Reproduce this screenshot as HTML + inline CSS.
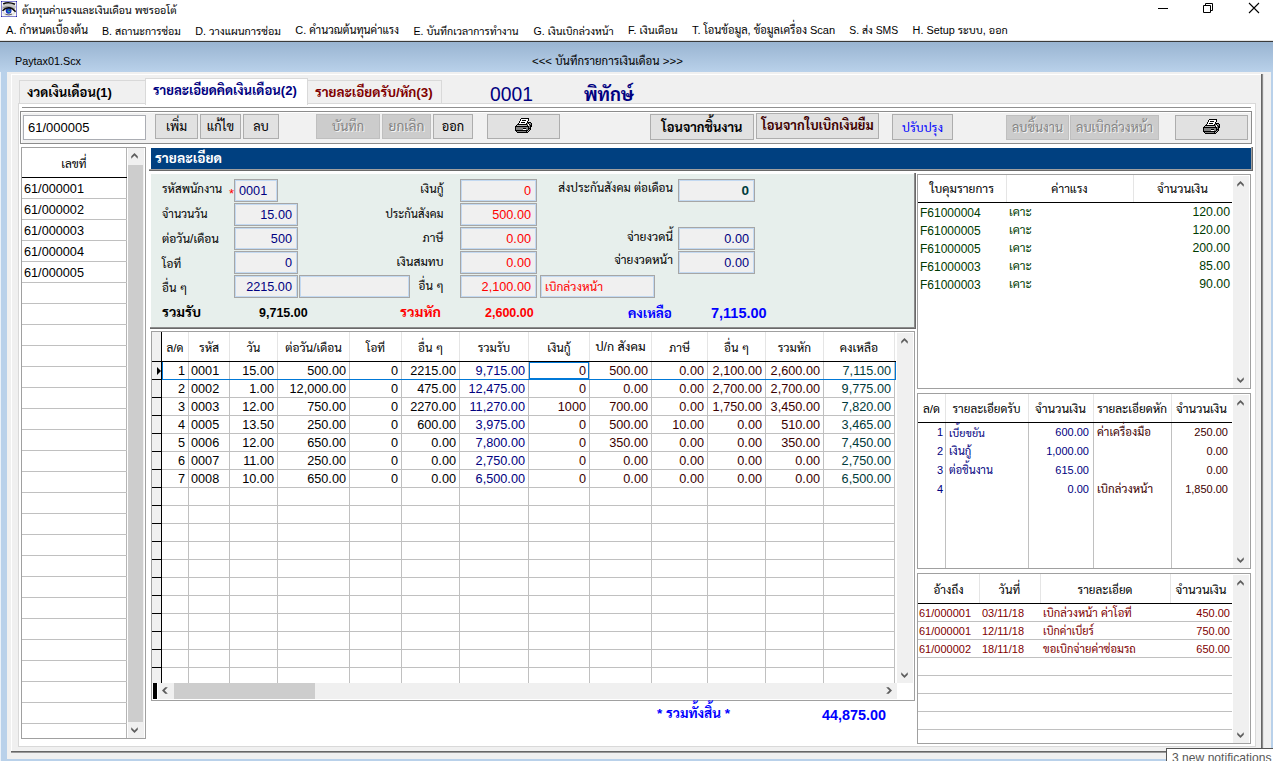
<!DOCTYPE html>
<html lang="th"><head><meta charset="utf-8"><title>Paytax01</title><style>
html,body{margin:0;padding:0;}
body{width:1273px;height:761px;position:relative;overflow:hidden;background:#fff;
 font-family:"Liberation Sans","Sarabun","Loma","Noto Sans Thai Looped","Noto Sans Thai",sans-serif;}
body>div,body>svg{position:absolute;box-sizing:content-box;}
.t{line-height:20px;height:20px;white-space:nowrap;}
.ui{font-family:"Liberation Sans","Sarabun","Noto Sans Thai UI","Loma",sans-serif;}
.serif{font-family:"Liberation Serif","Sarabun",serif;}
</style></head>
<body>
<div style="left:0px;top:0px;width:1273px;height:42px;background:#fff;"></div>
<svg style="left:1px;top:1px" width="16" height="16" viewBox="0 0 16 16">
<rect x="0" y="0" width="16" height="16" fill="#fafafa"/>
<ellipse cx="8" cy="6" rx="7" ry="3.2" fill="#c8c8c8"/>
<ellipse cx="8" cy="11.5" rx="6.5" ry="3.5" fill="#e2e2e2"/>
<path d="M2.2 3 Q7 0.4 14 3.3" stroke="#0a0a0a" stroke-width="1.7" fill="none"/>
<path d="M1.5 7.2 Q7 3.8 13.8 8" stroke="#8a8a8a" stroke-width="1" fill="none"/>
<path d="M2.5 10.5 Q8 5.5 14 10.5 Q8 15.5 2.5 10.5Z" fill="#fdfdfd"/>
<circle cx="7.6" cy="9.8" r="2.9" fill="#1628c4"/>
<circle cx="7.9" cy="9.9" r="1.6" fill="#1a9cae"/>
<circle cx="8.2" cy="9.4" r="0.7" fill="#5a2c48"/>
<path d="M1.5 9.8 Q4.5 6.6 8 6.8 Q11.5 7 14.6 10.8" stroke="#0c0c0c" stroke-width="1.5" fill="none"/>
<path d="M4.5 13.3 Q8 14.6 11 13.1" stroke="#555" stroke-width="0.9" fill="none"/>
<rect x="0.5" y="0.5" width="15" height="15" fill="none" stroke="#8080d0" stroke-width="1"/>
<rect x="0" y="0" width="1" height="1" fill="#2424a8"/><rect x="15" y="0" width="1" height="1" fill="#2424a8"/><rect x="0" y="15" width="1" height="1" fill="#2424a8"/><rect x="15" y="15" width="1" height="1" fill="#2424a8"/>
</svg>
<div class="t ui" id="t1" style="top:-0.5px;font-size:10.6px;color:#000;left:22px;"><span>ต้นทุนค่าแรงและเงินเดือน พชรออโต้</span></div>
<svg style="left:1150px;top:0" width="123" height="20" viewBox="0 0 123 20">
<path d="M8 8.5H18" stroke="#000" stroke-width="1" fill="none"/>
<path d="M53.5 5.5H60.5V12.5H53.5Z M55.5 5.5V3.5H62.5V10.5H60.5" stroke="#000" stroke-width="1" fill="none"/>
<path d="M99 3L109 13M109 3L99 13" stroke="#000" stroke-width="1.1" fill="none"/>
</svg>
<div class="t ui" id="t2" style="top:20.0px;font-size:11.1px;color:#000;left:6px;"><span>A. กำหนดเบื้องต้น</span></div>
<div class="t ui" id="t3" style="top:20.5px;font-size:10.65px;color:#000;left:102px;"><span>B. สถานะการซ่อม</span></div>
<div class="t ui" id="t4" style="top:20.5px;font-size:10.8px;color:#000;left:195.3px;"><span>D. วางแผนการซ่อม</span></div>
<div class="t ui" id="t5" style="top:20.0px;font-size:10.95px;color:#000;left:295.3px;"><span>C. คำนวณต้นทุนค่าแรง</span></div>
<div class="t ui" id="t6" style="top:20.5px;font-size:10.65px;color:#000;left:413.4px;"><span>E. บันทึกเวลาการทำงาน</span></div>
<div class="t ui" id="t7" style="top:20.5px;font-size:10.6px;color:#000;left:533.5px;"><span>G. เงินเบิกล่วงหน้า</span></div>
<div class="t ui" id="t8" style="top:20.0px;font-size:10.85px;color:#000;left:628px;"><span>F. เงินเดือน</span></div>
<div class="t ui" id="t9" style="top:20.0px;font-size:11.05px;color:#000;left:692px;"><span>T. โอนข้อมูล, ข้อมูลเครื่อง Scan</span></div>
<div class="t ui" id="t10" style="top:20.5px;font-size:10.4px;color:#000;left:849.3px;"><span>S. ส่ง SMS</span></div>
<div class="t ui" id="t11" style="top:20.0px;font-size:10.85px;color:#000;left:912.6px;"><span>H. Setup ระบบ, ออก</span></div>
<div style="left:0px;top:40px;width:1273px;height:1px;background:#e4e4e4;"></div>
<div style="left:0px;top:41px;width:1273px;height:1px;background:#3a3a3a;"></div>
<div style="left:0px;top:42px;width:1273px;height:30px;background:linear-gradient(#99b4d1,#b9d1ea);"></div>
<div class="t ui" id="t12" style="top:50.5px;font-size:10.8px;color:#000;left:15px;"><span>Paytax01.Scx</span></div>
<div class="t ui" id="t13" style="top:51.0px;font-size:11.45px;color:#000;left:532px;"><span>&lt;&lt;&lt; บันทึกรายการเงินเดือน &gt;&gt;&gt;</span></div>
<div style="left:0px;top:72px;width:1273px;height:689px;background:#b9d1ea;"></div>
<div style="left:0px;top:72px;width:1px;height:689px;background:#eaf1f9;"></div>
<div style="left:7px;top:72px;width:1264px;height:687px;background:#f0f0f0;"></div>
<div style="left:11px;top:74px;width:1250px;height:1px;background:#fff;"></div>
<div style="left:11px;top:74px;width:1px;height:677px;background:#fff;"></div>
<div style="left:1261px;top:74px;width:2px;height:679px;background:#8c8c8c;"></div>
<div style="left:11px;top:751px;width:1252px;height:2px;background:#9a9a9a;"></div>
<div style="left:1261px;top:74px;width:1px;height:678px;background:#666;"></div>
<div style="left:11px;top:751px;width:1251px;height:1px;background:#666;"></div>
<div style="left:1263px;top:74px;width:1px;height:679px;background:#e3e3e3;"></div>
<div style="left:18px;top:103px;width:1236px;height:642px;border:1px solid #d9d9d9;background:#fff;"></div>
<div style="left:19px;top:80px;width:125px;height:21px;border:1px solid #d9d9d9;background:#f0f0f0;border-bottom:none;height:22px;"></div>
<div style="left:307px;top:80px;width:133px;height:21px;border:1px solid #d9d9d9;background:#f0f0f0;border-bottom:none;height:22px;"></div>
<div style="left:145px;top:78px;width:161px;height:25px;border:1px solid #d9d9d9;background:#fff;border-bottom:none;height:26px;"></div>
<div class="t " id="t14" style="top:83.0px;font-size:13.05px;color:#000;font-weight:bold;left:27px;"><span>งวดเงินเดือน(1)</span></div>
<div class="t " id="t15" style="top:81.0px;font-size:13.1px;color:#000080;font-weight:bold;left:153px;"><span>รายละเอียดคิดเงินเดือน(2)</span></div>
<div class="t " id="t16" style="top:83.0px;font-size:13.45px;color:#800000;font-weight:bold;left:315px;"><span>รายละเอียดรับ/หัก(3)</span></div>
<div class="t " id="t17" style="top:84.5px;font-size:19.3px;color:#000080;left:490px;"><span>0001</span></div>
<div class="t " id="t18" style="top:84.5px;font-size:18.3px;color:#000080;font-weight:bold;left:584px;"><span>พิทักษ์</span></div>
<div style="left:22px;top:107px;width:1229px;height:1px;background:#8f8f8f;"></div>
<div style="left:20px;top:111px;width:1230px;height:31px;border:1px solid #8c8c8c;background:#f1f1f1;"></div>
<div style="left:21px;top:112px;width:1230px;height:1px;background:#fff;"></div>
<div style="left:21px;top:112px;width:1px;height:31px;background:#fff;"></div>
<div style="left:23px;top:115px;width:121px;height:23px;border:1px solid #abadb3;background:#fff;"></div>
<div class="t " id="t19" style="top:117.5px;font-size:13px;color:#000;left:28px;"><span>61/000005</span></div>
<div style="left:155px;top:114px;width:41px;height:23px;border:1px solid #adadad;background:#e1e1e1;"></div>
<div class="t " id="t20" style="top:116.5px;font-size:12.8px;color:#000;left:155px;width:43px;text-align:center;"><span>เพิ่ม</span></div>
<div style="left:200px;top:114px;width:39px;height:23px;border:1px solid #adadad;background:#e1e1e1;"></div>
<div class="t " id="t21" style="top:116.5px;font-size:12.8px;color:#000;left:200px;width:41px;text-align:center;"><span>แก้ไข</span></div>
<div style="left:243px;top:114px;width:34px;height:23px;border:1px solid #adadad;background:#e1e1e1;"></div>
<div class="t " id="t22" style="top:116.5px;font-size:12.8px;color:#000;left:243px;width:36px;text-align:center;"><span>ลบ</span></div>
<div style="left:316px;top:114px;width:62px;height:23px;border:1px solid #bfbfbf;background:#cccccc;"></div>
<div class="t " id="t23" style="top:117.0px;font-size:12.8px;color:#838383;left:316px;width:64px;text-align:center;text-shadow:1px 1px 0 #f4f4f4;"><span>บันทึก</span></div>
<div style="left:382px;top:114px;width:47px;height:23px;border:1px solid #bfbfbf;background:#cccccc;"></div>
<div class="t " id="t24" style="top:116.5px;font-size:13.75px;color:#838383;left:382px;width:49px;text-align:center;text-shadow:1px 1px 0 #f4f4f4;"><span>ยกเลิก</span></div>
<div style="left:433px;top:114px;width:38px;height:23px;border:1px solid #adadad;background:#e1e1e1;"></div>
<div class="t " id="t25" style="top:117.0px;font-size:12.8px;color:#000;left:433px;width:40px;text-align:center;"><span>ออก</span></div>
<div style="left:487px;top:114px;width:71px;height:23px;border:1px solid #adadad;background:#e1e1e1;"></div>
<div style="left:650px;top:114px;width:102px;height:24px;border:1px solid #adadad;background:#e1e1e1;"></div>
<div class="t " id="t26" style="top:117.5px;font-size:12.9px;color:#000;font-weight:bold;left:650px;width:104px;text-align:center;"><span>โอนจากชิ้นงาน</span></div>
<div style="left:756px;top:113px;width:121px;height:24px;border:1px solid #adadad;background:#e1e1e1;"></div>
<div class="t " id="t27" style="top:116.0px;font-size:12.95px;color:#400000;font-weight:bold;left:756px;width:123px;text-align:center;"><span>โอนจากใบเบิกเงินยืม</span></div>
<div style="left:892px;top:114px;width:59px;height:24px;border:1px solid #adadad;background:#e1e1e1;"></div>
<div class="t " id="t28" style="top:117.5px;font-size:12.1px;color:#0000ff;left:892px;width:61px;text-align:center;"><span>ปรับปรุง</span></div>
<div style="left:1006px;top:115px;width:61px;height:23px;border:1px solid #bfbfbf;background:#cccccc;"></div>
<div class="t " id="t29" style="top:117.5px;font-size:12.6px;color:#838383;left:1006px;width:63px;text-align:center;text-shadow:1px 1px 0 #f4f4f4;"><span>ลบชิ้นงาน</span></div>
<div style="left:1070px;top:115px;width:87px;height:23px;border:1px solid #bfbfbf;background:#cccccc;"></div>
<div class="t " id="t30" style="top:117.5px;font-size:12.7px;color:#838383;left:1070px;width:89px;text-align:center;text-shadow:1px 1px 0 #f4f4f4;"><span>ลบเบิกล่วงหน้า</span></div>
<div style="left:1175px;top:115px;width:71px;height:23px;border:1px solid #adadad;background:#e1e1e1;"></div>
<svg style="left:512px;top:118px" width="21" height="15" viewBox="0 0 21 15" shape-rendering="crispEdges"><rect x="9" y="0" width="8" height="1" fill="#000"/><rect x="8" y="1" width="1" height="1" fill="#000"/><rect x="9" y="1" width="7" height="1" fill="#fff"/><rect x="16" y="1" width="1" height="1" fill="#000"/><rect x="8" y="2" width="1" height="1" fill="#000"/><rect x="9" y="2" width="1" height="1" fill="#fff"/><rect x="10" y="2" width="4" height="1" fill="#000"/><rect x="14" y="2" width="2" height="1" fill="#fff"/><rect x="16" y="2" width="1" height="1" fill="#000"/><rect x="7" y="3" width="1" height="1" fill="#000"/><rect x="8" y="3" width="7" height="1" fill="#fff"/><rect x="15" y="3" width="1" height="1" fill="#000"/><rect x="7" y="4" width="1" height="1" fill="#000"/><rect x="8" y="4" width="1" height="1" fill="#fff"/><rect x="9" y="4" width="4" height="1" fill="#000"/><rect x="13" y="4" width="2" height="1" fill="#fff"/><rect x="15" y="4" width="4" height="1" fill="#000"/><rect x="6" y="5" width="1" height="1" fill="#000"/><rect x="7" y="5" width="7" height="1" fill="#fff"/><rect x="14" y="5" width="1" height="1" fill="#000"/><rect x="15" y="5" width="1" height="1" fill="#808080"/><rect x="16" y="5" width="1" height="1" fill="#000"/><rect x="17" y="5" width="1" height="1" fill="#b0b0b0"/><rect x="18" y="5" width="1" height="1" fill="#808080"/><rect x="19" y="5" width="1" height="1" fill="#000"/><rect x="5" y="6" width="10" height="1" fill="#000"/><rect x="15" y="6" width="1" height="1" fill="#808080"/><rect x="16" y="6" width="1" height="1" fill="#fff"/><rect x="17" y="6" width="1" height="1" fill="#000"/><rect x="18" y="6" width="1" height="1" fill="#808080"/><rect x="19" y="6" width="1" height="1" fill="#000"/><rect x="4" y="7" width="1" height="1" fill="#000"/><rect x="5" y="7" width="10" height="1" fill="#b0b0b0"/><rect x="15" y="7" width="1" height="1" fill="#000"/><rect x="16" y="7" width="1" height="1" fill="#fff"/><rect x="17" y="7" width="1" height="1" fill="#808080"/><rect x="18" y="7" width="2" height="1" fill="#000"/><rect x="3" y="8" width="14" height="1" fill="#000"/><rect x="17" y="8" width="1" height="1" fill="#808080"/><rect x="18" y="8" width="2" height="1" fill="#000"/><rect x="3" y="9" width="1" height="1" fill="#000"/><rect x="4" y="9" width="12" height="1" fill="#808080"/><rect x="16" y="9" width="1" height="1" fill="#000"/><rect x="17" y="9" width="1" height="1" fill="#808080"/><rect x="18" y="9" width="1" height="1" fill="#000"/><rect x="3" y="10" width="1" height="1" fill="#000"/><rect x="4" y="10" width="7" height="1" fill="#808080"/><rect x="11" y="10" width="3" height="1" fill="#000"/><rect x="14" y="10" width="2" height="1" fill="#808080"/><rect x="16" y="10" width="3" height="1" fill="#000"/><rect x="3" y="11" width="1" height="1" fill="#000"/><rect x="4" y="11" width="7" height="1" fill="#808080"/><rect x="11" y="11" width="3" height="1" fill="#fff"/><rect x="14" y="11" width="2" height="1" fill="#808080"/><rect x="16" y="11" width="1" height="1" fill="#000"/><rect x="17" y="11" width="1" height="1" fill="#808080"/><rect x="18" y="11" width="1" height="1" fill="#000"/><rect x="3" y="12" width="13" height="1" fill="#000"/><rect x="16" y="12" width="1" height="1" fill="#b0b0b0"/><rect x="17" y="12" width="1" height="1" fill="#000"/><rect x="4" y="13" width="1" height="1" fill="#000"/><rect x="5" y="13" width="9" height="1" fill="#808080"/><rect x="14" y="13" width="1" height="1" fill="#000"/><rect x="15" y="13" width="1" height="1" fill="#b0b0b0"/><rect x="16" y="13" width="1" height="1" fill="#000"/><rect x="5" y="14" width="11" height="1" fill="#000"/></svg>
<svg style="left:1200px;top:119px" width="21" height="15" viewBox="0 0 21 15" shape-rendering="crispEdges"><rect x="9" y="0" width="8" height="1" fill="#000"/><rect x="8" y="1" width="1" height="1" fill="#000"/><rect x="9" y="1" width="7" height="1" fill="#fff"/><rect x="16" y="1" width="1" height="1" fill="#000"/><rect x="8" y="2" width="1" height="1" fill="#000"/><rect x="9" y="2" width="1" height="1" fill="#fff"/><rect x="10" y="2" width="4" height="1" fill="#000"/><rect x="14" y="2" width="2" height="1" fill="#fff"/><rect x="16" y="2" width="1" height="1" fill="#000"/><rect x="7" y="3" width="1" height="1" fill="#000"/><rect x="8" y="3" width="7" height="1" fill="#fff"/><rect x="15" y="3" width="1" height="1" fill="#000"/><rect x="7" y="4" width="1" height="1" fill="#000"/><rect x="8" y="4" width="1" height="1" fill="#fff"/><rect x="9" y="4" width="4" height="1" fill="#000"/><rect x="13" y="4" width="2" height="1" fill="#fff"/><rect x="15" y="4" width="4" height="1" fill="#000"/><rect x="6" y="5" width="1" height="1" fill="#000"/><rect x="7" y="5" width="7" height="1" fill="#fff"/><rect x="14" y="5" width="1" height="1" fill="#000"/><rect x="15" y="5" width="1" height="1" fill="#808080"/><rect x="16" y="5" width="1" height="1" fill="#000"/><rect x="17" y="5" width="1" height="1" fill="#b0b0b0"/><rect x="18" y="5" width="1" height="1" fill="#808080"/><rect x="19" y="5" width="1" height="1" fill="#000"/><rect x="5" y="6" width="10" height="1" fill="#000"/><rect x="15" y="6" width="1" height="1" fill="#808080"/><rect x="16" y="6" width="1" height="1" fill="#fff"/><rect x="17" y="6" width="1" height="1" fill="#000"/><rect x="18" y="6" width="1" height="1" fill="#808080"/><rect x="19" y="6" width="1" height="1" fill="#000"/><rect x="4" y="7" width="1" height="1" fill="#000"/><rect x="5" y="7" width="10" height="1" fill="#b0b0b0"/><rect x="15" y="7" width="1" height="1" fill="#000"/><rect x="16" y="7" width="1" height="1" fill="#fff"/><rect x="17" y="7" width="1" height="1" fill="#808080"/><rect x="18" y="7" width="2" height="1" fill="#000"/><rect x="3" y="8" width="14" height="1" fill="#000"/><rect x="17" y="8" width="1" height="1" fill="#808080"/><rect x="18" y="8" width="2" height="1" fill="#000"/><rect x="3" y="9" width="1" height="1" fill="#000"/><rect x="4" y="9" width="12" height="1" fill="#808080"/><rect x="16" y="9" width="1" height="1" fill="#000"/><rect x="17" y="9" width="1" height="1" fill="#808080"/><rect x="18" y="9" width="1" height="1" fill="#000"/><rect x="3" y="10" width="1" height="1" fill="#000"/><rect x="4" y="10" width="7" height="1" fill="#808080"/><rect x="11" y="10" width="3" height="1" fill="#000"/><rect x="14" y="10" width="2" height="1" fill="#808080"/><rect x="16" y="10" width="3" height="1" fill="#000"/><rect x="3" y="11" width="1" height="1" fill="#000"/><rect x="4" y="11" width="7" height="1" fill="#808080"/><rect x="11" y="11" width="3" height="1" fill="#fff"/><rect x="14" y="11" width="2" height="1" fill="#808080"/><rect x="16" y="11" width="1" height="1" fill="#000"/><rect x="17" y="11" width="1" height="1" fill="#808080"/><rect x="18" y="11" width="1" height="1" fill="#000"/><rect x="3" y="12" width="13" height="1" fill="#000"/><rect x="16" y="12" width="1" height="1" fill="#b0b0b0"/><rect x="17" y="12" width="1" height="1" fill="#000"/><rect x="4" y="13" width="1" height="1" fill="#000"/><rect x="5" y="13" width="9" height="1" fill="#808080"/><rect x="14" y="13" width="1" height="1" fill="#000"/><rect x="15" y="13" width="1" height="1" fill="#b0b0b0"/><rect x="16" y="13" width="1" height="1" fill="#000"/><rect x="5" y="14" width="11" height="1" fill="#000"/></svg>
<div style="left:21px;top:147px;width:123px;height:590px;border:1px solid #a0a0a0;background:#fff;"></div>
<div style="left:126px;top:148px;width:1px;height:590px;background:#b4b4b4;"></div>
<div style="left:127px;top:148px;width:18px;height:590px;background:#fff;"></div>
<div style="left:128px;top:148px;width:16px;height:590px;background:#f0f0f0;"></div>
<div style="left:128px;top:165px;width:15px;height:557px;background:#cdcdcd;"></div>
<div class="t " id="t31" style="top:154.0px;font-size:11.8px;color:#000;left:22px;width:104px;text-align:center;"><span>เลขที่</span></div>
<div style="left:22px;top:177px;width:105px;height:1px;background:#000;"></div>
<div style="left:22px;top:198px;width:105px;height:1px;background:#c0c0c0;"></div>
<div style="left:22px;top:219px;width:105px;height:1px;background:#c0c0c0;"></div>
<div style="left:22px;top:240px;width:105px;height:1px;background:#c0c0c0;"></div>
<div style="left:22px;top:261px;width:105px;height:1px;background:#c0c0c0;"></div>
<div style="left:22px;top:282px;width:105px;height:1px;background:#c0c0c0;"></div>
<div style="left:22px;top:303px;width:105px;height:1px;background:#c0c0c0;"></div>
<div style="left:22px;top:324px;width:105px;height:1px;background:#c0c0c0;"></div>
<div style="left:22px;top:345px;width:105px;height:1px;background:#c0c0c0;"></div>
<div style="left:22px;top:366px;width:105px;height:1px;background:#c0c0c0;"></div>
<div style="left:22px;top:387px;width:105px;height:1px;background:#c0c0c0;"></div>
<div style="left:22px;top:408px;width:105px;height:1px;background:#c0c0c0;"></div>
<div style="left:22px;top:429px;width:105px;height:1px;background:#c0c0c0;"></div>
<div style="left:22px;top:450px;width:105px;height:1px;background:#c0c0c0;"></div>
<div style="left:22px;top:471px;width:105px;height:1px;background:#c0c0c0;"></div>
<div style="left:22px;top:492px;width:105px;height:1px;background:#c0c0c0;"></div>
<div style="left:22px;top:513px;width:105px;height:1px;background:#c0c0c0;"></div>
<div style="left:22px;top:534px;width:105px;height:1px;background:#c0c0c0;"></div>
<div style="left:22px;top:555px;width:105px;height:1px;background:#c0c0c0;"></div>
<div style="left:22px;top:576px;width:105px;height:1px;background:#c0c0c0;"></div>
<div style="left:22px;top:597px;width:105px;height:1px;background:#c0c0c0;"></div>
<div style="left:22px;top:618px;width:105px;height:1px;background:#c0c0c0;"></div>
<div style="left:22px;top:639px;width:105px;height:1px;background:#c0c0c0;"></div>
<div style="left:22px;top:660px;width:105px;height:1px;background:#c0c0c0;"></div>
<div style="left:22px;top:681px;width:105px;height:1px;background:#c0c0c0;"></div>
<div style="left:22px;top:702px;width:105px;height:1px;background:#c0c0c0;"></div>
<div style="left:22px;top:723px;width:105px;height:1px;background:#c0c0c0;"></div>
<div class="t " id="t32" style="top:178.5px;font-size:12.7px;color:#000;left:24px;"><span>61/000001</span></div>
<div class="t " id="t33" style="top:199.5px;font-size:12.7px;color:#000;left:24px;"><span>61/000002</span></div>
<div class="t " id="t34" style="top:220.5px;font-size:12.7px;color:#000;left:24px;"><span>61/000003</span></div>
<div class="t " id="t35" style="top:241.5px;font-size:12.7px;color:#000;left:24px;"><span>61/000004</span></div>
<div class="t " id="t36" style="top:262.5px;font-size:12.7px;color:#000;left:24px;"><span>61/000005</span></div>
<svg style="left:131px;top:153px" width="7" height="6" viewBox="0 0 8 7"><path d="M0.2 3.8L4 0L7.8 3.8V6.8L4 3L0.2 6.8Z" fill="#5e5e5e"/></svg>
<svg style="left:131px;top:727px" width="7" height="6" viewBox="0 0 8 7"><path d="M0.2 3.2L4 7L7.8 3.2V0.2L4 4L0.2 0.2Z" fill="#5e5e5e"/></svg>
<div style="left:149px;top:147px;width:1104px;height:24px;background:#696969;"></div>
<div style="left:149px;top:147px;width:1103px;height:23px;background:#a0a0a0;"></div>
<div style="left:149px;top:146px;width:1102px;height:23px;background:#fff;"></div>
<div style="left:151px;top:148px;width:1100px;height:21px;background:#004080;"></div>
<div class="t " id="t37" style="top:149.0px;font-size:13.75px;color:#fff;font-weight:bold;left:155px;"><span>รายละเอียด</span></div>
<div style="left:150px;top:173px;width:766px;height:156px;background:#696969;"></div>
<div style="left:150px;top:173px;width:765px;height:155px;background:#8c8c8c;"></div>
<div style="left:150px;top:173px;width:764px;height:154px;background:#fff;"></div>
<div style="left:151px;top:174px;width:763px;height:153px;background:#e7efec;"></div>
<div class="t " id="t38" style="top:178.5px;font-size:11.55px;color:#000;left:162px;"><span>รหัสพนักงาน</span></div>
<div class="t " id="t39" style="top:204.0px;font-size:11.45px;color:#000;left:162px;"><span>จำนวนวัน</span></div>
<div class="t " id="t40" style="top:229.0px;font-size:12.0px;color:#000;left:162px;"><span>ต่อวัน/เดือน</span></div>
<div class="t " id="t41" style="top:254.0px;font-size:11.8px;color:#000;left:162px;"><span>โอที</span></div>
<div class="t " id="t42" style="top:277.5px;font-size:11.8px;color:#000;left:162px;"><span>อื่น ๆ</span></div>
<div class="t " id="t43" style="top:183.5px;font-size:13px;color:#ff0000;left:229px;"><span>*</span></div>
<div style="left:234px;top:179px;width:42px;height:21px;border:1px solid #a6a6a6;background:#f0f0f0;"></div>
<div style="left:235px;top:180px;width:40px;height:19px;border:1px solid #c3d9f1;"></div>
<div class="t " id="t44" style="top:180.5px;font-size:12.7px;color:#000080;left:239px;"><span>0001</span></div>
<div style="left:234px;top:203px;width:62px;height:21px;border:1px solid #a6a6a6;background:#f0f0f0;"></div>
<div style="left:235px;top:204px;width:60px;height:19px;border:1px solid #c3d9f1;"></div>
<div class="t " id="t45" style="top:204.5px;font-size:12.7px;color:#000080;right:981px;"><span>15.00</span></div>
<div style="left:234px;top:227px;width:62px;height:21px;border:1px solid #a6a6a6;background:#f0f0f0;"></div>
<div style="left:235px;top:228px;width:60px;height:19px;border:1px solid #c3d9f1;"></div>
<div class="t " id="t46" style="top:228.5px;font-size:12.7px;color:#000080;right:981px;"><span>500</span></div>
<div style="left:234px;top:251px;width:62px;height:21px;border:1px solid #a6a6a6;background:#f0f0f0;"></div>
<div style="left:235px;top:252px;width:60px;height:19px;border:1px solid #c3d9f1;"></div>
<div class="t " id="t47" style="top:252.5px;font-size:12.7px;color:#000080;right:981px;"><span>0</span></div>
<div style="left:234px;top:275px;width:62px;height:21px;border:1px solid #a6a6a6;background:#f0f0f0;"></div>
<div style="left:235px;top:276px;width:60px;height:19px;border:1px solid #c3d9f1;"></div>
<div class="t " id="t48" style="top:276.5px;font-size:12.7px;color:#000080;right:981px;"><span>2215.00</span></div>
<div style="left:299px;top:275px;width:109px;height:21px;border:1px solid #a6a6a6;background:#f0f0f0;"></div>
<div style="left:300px;top:276px;width:107px;height:19px;border:1px solid #c3d9f1;"></div>
<div class="t " id="t49" style="top:179.0px;font-size:11.8px;color:#000;right:829.5px;"><span>เงินกู้</span></div>
<div class="t " id="t50" style="top:204.0px;font-size:11.3px;color:#000;right:829.5px;"><span>ประกันสังคม</span></div>
<div class="t " id="t51" style="top:228.0px;font-size:11.8px;color:#000;right:829.5px;"><span>ภาษี</span></div>
<div class="t " id="t52" style="top:251.5px;font-size:12.05px;color:#000;right:829.5px;"><span>เงินสมทบ</span></div>
<div class="t " id="t53" style="top:276.0px;font-size:11.8px;color:#000;right:829.5px;"><span>อื่น ๆ</span></div>
<div style="left:460px;top:179px;width:75px;height:21px;border:1px solid #a6a6a6;background:#f0f0f0;"></div>
<div style="left:461px;top:180px;width:73px;height:19px;border:1px solid #c3d9f1;"></div>
<div class="t " id="t54" style="top:180.5px;font-size:12.7px;color:#ff0000;right:742px;"><span>0</span></div>
<div style="left:460px;top:203px;width:75px;height:21px;border:1px solid #a6a6a6;background:#f0f0f0;"></div>
<div style="left:461px;top:204px;width:73px;height:19px;border:1px solid #c3d9f1;"></div>
<div class="t " id="t55" style="top:204.5px;font-size:12.7px;color:#ff0000;right:742px;"><span>500.00</span></div>
<div style="left:460px;top:227px;width:75px;height:21px;border:1px solid #a6a6a6;background:#f0f0f0;"></div>
<div style="left:461px;top:228px;width:73px;height:19px;border:1px solid #c3d9f1;"></div>
<div class="t " id="t56" style="top:228.5px;font-size:12.7px;color:#ff0000;right:742px;"><span>0.00</span></div>
<div style="left:460px;top:251px;width:75px;height:21px;border:1px solid #a6a6a6;background:#f0f0f0;"></div>
<div style="left:461px;top:252px;width:73px;height:19px;border:1px solid #c3d9f1;"></div>
<div class="t " id="t57" style="top:252.5px;font-size:12.7px;color:#ff0000;right:742px;"><span>0.00</span></div>
<div style="left:460px;top:275px;width:75px;height:21px;border:1px solid #a6a6a6;background:#f0f0f0;"></div>
<div style="left:461px;top:276px;width:73px;height:19px;border:1px solid #c3d9f1;"></div>
<div class="t " id="t58" style="top:276.5px;font-size:12.7px;color:#ff0000;right:742px;"><span>2,100.00</span></div>
<div style="left:540px;top:275px;width:113px;height:21px;border:1px solid #a6a6a6;background:#f0f0f0;"></div>
<div style="left:541px;top:276px;width:111px;height:19px;border:1px solid #c3d9f1;"></div>
<div class="t " id="t59" style="top:277.0px;font-size:12.0px;color:#ff0000;left:545px;"><span>เบิกล่วงหน้า</span></div>
<div class="t " id="t60" style="top:178.0px;font-size:11.75px;color:#000;right:600px;"><span>ส่งประกันสังคม ต่อเดือน</span></div>
<div style="left:678px;top:179px;width:75px;height:21px;border:1px solid #a6a6a6;background:#f0f0f0;"></div>
<div style="left:679px;top:180px;width:73px;height:19px;border:1px solid #c3d9f1;"></div>
<div class="t " id="t61" style="top:181.0px;font-size:13.5px;color:#003c3c;font-weight:bold;right:524px;"><span>0</span></div>
<div class="t " id="t62" style="top:227.0px;font-size:12.1px;color:#000;right:600px;"><span>จ่ายงวดนี้</span></div>
<div class="t " id="t63" style="top:250.0px;font-size:11.95px;color:#000;right:600px;"><span>จ่ายงวดหน้า</span></div>
<div style="left:678px;top:227px;width:75px;height:21px;border:1px solid #a6a6a6;background:#f0f0f0;"></div>
<div style="left:679px;top:228px;width:73px;height:19px;border:1px solid #c3d9f1;"></div>
<div class="t " id="t64" style="top:228.5px;font-size:12.7px;color:#000080;right:524px;"><span>0.00</span></div>
<div style="left:678px;top:251px;width:75px;height:21px;border:1px solid #a6a6a6;background:#f0f0f0;"></div>
<div style="left:679px;top:252px;width:73px;height:19px;border:1px solid #c3d9f1;"></div>
<div class="t " id="t65" style="top:252.5px;font-size:12.7px;color:#000080;right:524px;"><span>0.00</span></div>
<div class="t " id="t66" style="top:302.0px;font-size:13.85px;color:#000;font-weight:bold;left:162px;"><span>รวมรับ</span></div>
<div class="t " id="t67" style="top:302.5px;font-size:12.5px;color:#000;font-weight:bold;left:259px;"><span>9,715.00</span></div>
<div class="t " id="t68" style="top:302.0px;font-size:14.1px;color:#ff0000;font-weight:bold;left:400px;"><span>รวมหัก</span></div>
<div class="t " id="t69" style="top:302.5px;font-size:12.5px;color:#ff0000;font-weight:bold;left:485px;"><span>2,600.00</span></div>
<div class="t " id="t70" style="top:303.5px;font-size:13.4px;color:#0000ff;font-weight:bold;left:628px;"><span>คงเหลือ</span></div>
<div class="t " id="t71" style="top:303.0px;font-size:14.5px;color:#0000ff;font-weight:bold;left:711px;"><span>7,115.00</span></div>
<div style="left:151px;top:331px;width:762px;height:368px;border:1px solid #a0a0a0;background:#fff;"></div>
<div style="left:152px;top:332px;width:9px;height:351px;background:#f0f0f0;"></div>
<div style="left:188px;top:332px;width:1px;height:29px;background:#e5e5e5;"></div>
<div style="left:229px;top:332px;width:1px;height:29px;background:#e5e5e5;"></div>
<div style="left:277px;top:332px;width:1px;height:29px;background:#e5e5e5;"></div>
<div style="left:349px;top:332px;width:1px;height:29px;background:#e5e5e5;"></div>
<div style="left:401px;top:332px;width:1px;height:29px;background:#e5e5e5;"></div>
<div style="left:459px;top:332px;width:1px;height:29px;background:#e5e5e5;"></div>
<div style="left:528px;top:332px;width:1px;height:29px;background:#e5e5e5;"></div>
<div style="left:589px;top:332px;width:1px;height:29px;background:#e5e5e5;"></div>
<div style="left:651px;top:332px;width:1px;height:29px;background:#e5e5e5;"></div>
<div style="left:707px;top:332px;width:1px;height:29px;background:#e5e5e5;"></div>
<div style="left:765px;top:332px;width:1px;height:29px;background:#e5e5e5;"></div>
<div style="left:823px;top:332px;width:1px;height:29px;background:#e5e5e5;"></div>
<div style="left:894px;top:332px;width:1px;height:29px;background:#e5e5e5;"></div>
<div class="t " id="t72" style="top:337.5px;font-size:11.8px;color:#000;left:162px;width:26px;text-align:center;"><span>ล/ด</span></div>
<div class="t " id="t73" style="top:337.5px;font-size:11.8px;color:#000;left:189px;width:40px;text-align:center;"><span>รหัส</span></div>
<div class="t " id="t74" style="top:337.5px;font-size:11.8px;color:#000;left:230px;width:47px;text-align:center;"><span>วัน</span></div>
<div class="t " id="t75" style="top:337.5px;font-size:11.95px;color:#000;left:278px;width:71px;text-align:center;"><span>ต่อวัน/เดือน</span></div>
<div class="t " id="t76" style="top:337.5px;font-size:11.8px;color:#000;left:350px;width:51px;text-align:center;"><span>โอที</span></div>
<div class="t " id="t77" style="top:337.5px;font-size:11.8px;color:#000;left:402px;width:57px;text-align:center;"><span>อื่น ๆ</span></div>
<div class="t " id="t78" style="top:337.5px;font-size:11.8px;color:#000;left:460px;width:68px;text-align:center;"><span>รวมรับ</span></div>
<div class="t " id="t79" style="top:337.5px;font-size:11.8px;color:#000;left:529px;width:60px;text-align:center;"><span>เงินกู้</span></div>
<div class="t " id="t80" style="top:337.0px;font-size:12.45px;color:#000;left:590px;width:61px;text-align:center;"><span>ป/ก สังคม</span></div>
<div class="t " id="t81" style="top:337.5px;font-size:11.8px;color:#000;left:652px;width:55px;text-align:center;"><span>ภาษี</span></div>
<div class="t " id="t82" style="top:337.5px;font-size:11.8px;color:#000;left:708px;width:57px;text-align:center;"><span>อื่น ๆ</span></div>
<div class="t " id="t83" style="top:337.5px;font-size:11.8px;color:#000;left:766px;width:57px;text-align:center;"><span>รวมหัก</span></div>
<div class="t " id="t84" style="top:337.5px;font-size:12.1px;color:#000;left:824px;width:70px;text-align:center;"><span>คงเหลือ</span></div>
<div style="left:188px;top:362px;width:1px;height:321px;background:#c0c0c0;"></div>
<div style="left:229px;top:362px;width:1px;height:321px;background:#c0c0c0;"></div>
<div style="left:277px;top:362px;width:1px;height:321px;background:#c0c0c0;"></div>
<div style="left:349px;top:362px;width:1px;height:321px;background:#c0c0c0;"></div>
<div style="left:401px;top:362px;width:1px;height:321px;background:#c0c0c0;"></div>
<div style="left:459px;top:362px;width:1px;height:321px;background:#c0c0c0;"></div>
<div style="left:528px;top:362px;width:1px;height:321px;background:#c0c0c0;"></div>
<div style="left:589px;top:362px;width:1px;height:321px;background:#c0c0c0;"></div>
<div style="left:651px;top:362px;width:1px;height:321px;background:#c0c0c0;"></div>
<div style="left:707px;top:362px;width:1px;height:321px;background:#c0c0c0;"></div>
<div style="left:765px;top:362px;width:1px;height:321px;background:#c0c0c0;"></div>
<div style="left:823px;top:362px;width:1px;height:321px;background:#c0c0c0;"></div>
<div style="left:894px;top:362px;width:1px;height:321px;background:#c0c0c0;"></div>
<div style="left:162px;top:379px;width:733px;height:1px;background:#c0c0c0;"></div>
<div style="left:152px;top:379px;width:9px;height:1px;background:#000;"></div>
<div style="left:162px;top:397px;width:733px;height:1px;background:#c0c0c0;"></div>
<div style="left:152px;top:397px;width:9px;height:1px;background:#000;"></div>
<div style="left:162px;top:415px;width:733px;height:1px;background:#c0c0c0;"></div>
<div style="left:152px;top:415px;width:9px;height:1px;background:#000;"></div>
<div style="left:162px;top:433px;width:733px;height:1px;background:#c0c0c0;"></div>
<div style="left:152px;top:433px;width:9px;height:1px;background:#000;"></div>
<div style="left:162px;top:451px;width:733px;height:1px;background:#c0c0c0;"></div>
<div style="left:152px;top:451px;width:9px;height:1px;background:#000;"></div>
<div style="left:162px;top:469px;width:733px;height:1px;background:#c0c0c0;"></div>
<div style="left:152px;top:469px;width:9px;height:1px;background:#000;"></div>
<div style="left:162px;top:487px;width:733px;height:1px;background:#c0c0c0;"></div>
<div style="left:152px;top:487px;width:9px;height:1px;background:#000;"></div>
<div style="left:162px;top:505px;width:733px;height:1px;background:#c0c0c0;"></div>
<div style="left:152px;top:505px;width:9px;height:1px;background:#000;"></div>
<div style="left:162px;top:523px;width:733px;height:1px;background:#c0c0c0;"></div>
<div style="left:152px;top:523px;width:9px;height:1px;background:#000;"></div>
<div style="left:162px;top:541px;width:733px;height:1px;background:#c0c0c0;"></div>
<div style="left:152px;top:541px;width:9px;height:1px;background:#000;"></div>
<div style="left:162px;top:559px;width:733px;height:1px;background:#c0c0c0;"></div>
<div style="left:152px;top:559px;width:9px;height:1px;background:#000;"></div>
<div style="left:162px;top:577px;width:733px;height:1px;background:#c0c0c0;"></div>
<div style="left:152px;top:577px;width:9px;height:1px;background:#000;"></div>
<div style="left:162px;top:595px;width:733px;height:1px;background:#c0c0c0;"></div>
<div style="left:152px;top:595px;width:9px;height:1px;background:#000;"></div>
<div style="left:162px;top:613px;width:733px;height:1px;background:#c0c0c0;"></div>
<div style="left:152px;top:613px;width:9px;height:1px;background:#000;"></div>
<div style="left:162px;top:631px;width:733px;height:1px;background:#c0c0c0;"></div>
<div style="left:152px;top:631px;width:9px;height:1px;background:#000;"></div>
<div style="left:162px;top:649px;width:733px;height:1px;background:#c0c0c0;"></div>
<div style="left:152px;top:649px;width:9px;height:1px;background:#000;"></div>
<div style="left:162px;top:667px;width:733px;height:1px;background:#c0c0c0;"></div>
<div style="left:152px;top:667px;width:9px;height:1px;background:#000;"></div>
<div style="left:161px;top:332px;width:1px;height:351px;background:#000;"></div>
<div style="left:152px;top:361px;width:744px;height:1px;background:#000;"></div>
<div style="left:896px;top:332px;width:1px;height:351px;background:#fff;"></div>
<div style="left:897px;top:333px;width:16px;height:350px;background:#f0f0f0;"></div>
<svg style="left:901px;top:338px" width="7" height="6" viewBox="0 0 8 7"><path d="M0.2 3.8L4 0L7.8 3.8V6.8L4 3L0.2 6.8Z" fill="#5e5e5e"/></svg>
<svg style="left:901px;top:672px" width="7" height="6" viewBox="0 0 8 7"><path d="M0.2 3.2L4 7L7.8 3.2V0.2L4 4L0.2 0.2Z" fill="#5e5e5e"/></svg>
<div style="left:158px;top:683px;width:739px;height:16px;background:#f0f0f0;"></div>
<div style="left:153px;top:683px;width:4px;height:16px;background:#000;"></div>
<div style="left:174px;top:683px;width:141px;height:16px;background:#cdcdcd;"></div>
<svg style="left:162px;top:687px" width="6" height="7" viewBox="0 0 7 8"><path d="M3.8 0.2L0 4L3.8 7.8H6.8L3 4L6.8 0.2Z" fill="#5e5e5e"/></svg>
<svg style="left:886px;top:687px" width="6" height="7" viewBox="0 0 7 8"><path d="M3.2 0.2L7 4L3.2 7.8H0.2L4 4L0.2 0.2Z" fill="#5e5e5e"/></svg>
<div class="t " id="t85" style="top:360.5px;font-size:12.7px;color:#000;right:1088px;"><span>1</span></div>
<div class="t " id="t86" style="top:360.5px;font-size:12.7px;color:#000;left:191px;"><span>0001</span></div>
<div class="t " id="t87" style="top:360.5px;font-size:12.7px;color:#000;right:999px;"><span>15.00</span></div>
<div class="t " id="t88" style="top:360.5px;font-size:12.7px;color:#000;right:927px;"><span>500.00</span></div>
<div class="t " id="t89" style="top:360.5px;font-size:12.7px;color:#000;right:875px;"><span>0</span></div>
<div class="t " id="t90" style="top:360.5px;font-size:12.7px;color:#000;right:817px;"><span>2215.00</span></div>
<div class="t " id="t91" style="top:360.5px;font-size:12.7px;color:#000080;right:748px;"><span>9,715.00</span></div>
<div class="t " id="t92" style="top:360.5px;font-size:12.7px;color:#3a0000;right:687px;"><span>0</span></div>
<div class="t " id="t93" style="top:360.5px;font-size:12.7px;color:#3a0000;right:625px;"><span>500.00</span></div>
<div class="t " id="t94" style="top:360.5px;font-size:12.7px;color:#3a0000;right:569px;"><span>0.00</span></div>
<div class="t " id="t95" style="top:360.5px;font-size:12.7px;color:#3a0000;right:511px;"><span>2,100.00</span></div>
<div class="t " id="t96" style="top:360.5px;font-size:12.7px;color:#3a0000;right:453px;"><span>2,600.00</span></div>
<div class="t " id="t97" style="top:360.5px;font-size:12.7px;color:#003a3a;right:382px;"><span>7,115.00</span></div>
<div class="t " id="t98" style="top:378.5px;font-size:12.7px;color:#000;right:1088px;"><span>2</span></div>
<div class="t " id="t99" style="top:378.5px;font-size:12.7px;color:#000;left:191px;"><span>0002</span></div>
<div class="t " id="t100" style="top:378.5px;font-size:12.7px;color:#000;right:999px;"><span>1.00</span></div>
<div class="t " id="t101" style="top:378.5px;font-size:12.7px;color:#000;right:927px;"><span>12,000.00</span></div>
<div class="t " id="t102" style="top:378.5px;font-size:12.7px;color:#000;right:875px;"><span>0</span></div>
<div class="t " id="t103" style="top:378.5px;font-size:12.7px;color:#000;right:817px;"><span>475.00</span></div>
<div class="t " id="t104" style="top:378.5px;font-size:12.7px;color:#000080;right:748px;"><span>12,475.00</span></div>
<div class="t " id="t105" style="top:378.5px;font-size:12.7px;color:#3a0000;right:687px;"><span>0</span></div>
<div class="t " id="t106" style="top:378.5px;font-size:12.7px;color:#3a0000;right:625px;"><span>0.00</span></div>
<div class="t " id="t107" style="top:378.5px;font-size:12.7px;color:#3a0000;right:569px;"><span>0.00</span></div>
<div class="t " id="t108" style="top:378.5px;font-size:12.7px;color:#3a0000;right:511px;"><span>2,700.00</span></div>
<div class="t " id="t109" style="top:378.5px;font-size:12.7px;color:#3a0000;right:453px;"><span>2,700.00</span></div>
<div class="t " id="t110" style="top:378.5px;font-size:12.7px;color:#003a3a;right:382px;"><span>9,775.00</span></div>
<div class="t " id="t111" style="top:396.5px;font-size:12.7px;color:#000;right:1088px;"><span>3</span></div>
<div class="t " id="t112" style="top:396.5px;font-size:12.7px;color:#000;left:191px;"><span>0003</span></div>
<div class="t " id="t113" style="top:396.5px;font-size:12.7px;color:#000;right:999px;"><span>12.00</span></div>
<div class="t " id="t114" style="top:396.5px;font-size:12.7px;color:#000;right:927px;"><span>750.00</span></div>
<div class="t " id="t115" style="top:396.5px;font-size:12.7px;color:#000;right:875px;"><span>0</span></div>
<div class="t " id="t116" style="top:396.5px;font-size:12.7px;color:#000;right:817px;"><span>2270.00</span></div>
<div class="t " id="t117" style="top:396.5px;font-size:12.7px;color:#000080;right:748px;"><span>11,270.00</span></div>
<div class="t " id="t118" style="top:396.5px;font-size:12.7px;color:#3a0000;right:687px;"><span>1000</span></div>
<div class="t " id="t119" style="top:396.5px;font-size:12.7px;color:#3a0000;right:625px;"><span>700.00</span></div>
<div class="t " id="t120" style="top:396.5px;font-size:12.7px;color:#3a0000;right:569px;"><span>0.00</span></div>
<div class="t " id="t121" style="top:396.5px;font-size:12.7px;color:#3a0000;right:511px;"><span>1,750.00</span></div>
<div class="t " id="t122" style="top:396.5px;font-size:12.7px;color:#3a0000;right:453px;"><span>3,450.00</span></div>
<div class="t " id="t123" style="top:396.5px;font-size:12.7px;color:#003a3a;right:382px;"><span>7,820.00</span></div>
<div class="t " id="t124" style="top:414.5px;font-size:12.7px;color:#000;right:1088px;"><span>4</span></div>
<div class="t " id="t125" style="top:414.5px;font-size:12.7px;color:#000;left:191px;"><span>0005</span></div>
<div class="t " id="t126" style="top:414.5px;font-size:12.7px;color:#000;right:999px;"><span>13.50</span></div>
<div class="t " id="t127" style="top:414.5px;font-size:12.7px;color:#000;right:927px;"><span>250.00</span></div>
<div class="t " id="t128" style="top:414.5px;font-size:12.7px;color:#000;right:875px;"><span>0</span></div>
<div class="t " id="t129" style="top:414.5px;font-size:12.7px;color:#000;right:817px;"><span>600.00</span></div>
<div class="t " id="t130" style="top:414.5px;font-size:12.7px;color:#000080;right:748px;"><span>3,975.00</span></div>
<div class="t " id="t131" style="top:414.5px;font-size:12.7px;color:#3a0000;right:687px;"><span>0</span></div>
<div class="t " id="t132" style="top:414.5px;font-size:12.7px;color:#3a0000;right:625px;"><span>500.00</span></div>
<div class="t " id="t133" style="top:414.5px;font-size:12.7px;color:#3a0000;right:569px;"><span>10.00</span></div>
<div class="t " id="t134" style="top:414.5px;font-size:12.7px;color:#3a0000;right:511px;"><span>0.00</span></div>
<div class="t " id="t135" style="top:414.5px;font-size:12.7px;color:#3a0000;right:453px;"><span>510.00</span></div>
<div class="t " id="t136" style="top:414.5px;font-size:12.7px;color:#003a3a;right:382px;"><span>3,465.00</span></div>
<div class="t " id="t137" style="top:432.5px;font-size:12.7px;color:#000;right:1088px;"><span>5</span></div>
<div class="t " id="t138" style="top:432.5px;font-size:12.7px;color:#000;left:191px;"><span>0006</span></div>
<div class="t " id="t139" style="top:432.5px;font-size:12.7px;color:#000;right:999px;"><span>12.00</span></div>
<div class="t " id="t140" style="top:432.5px;font-size:12.7px;color:#000;right:927px;"><span>650.00</span></div>
<div class="t " id="t141" style="top:432.5px;font-size:12.7px;color:#000;right:875px;"><span>0</span></div>
<div class="t " id="t142" style="top:432.5px;font-size:12.7px;color:#000;right:817px;"><span>0.00</span></div>
<div class="t " id="t143" style="top:432.5px;font-size:12.7px;color:#000080;right:748px;"><span>7,800.00</span></div>
<div class="t " id="t144" style="top:432.5px;font-size:12.7px;color:#3a0000;right:687px;"><span>0</span></div>
<div class="t " id="t145" style="top:432.5px;font-size:12.7px;color:#3a0000;right:625px;"><span>350.00</span></div>
<div class="t " id="t146" style="top:432.5px;font-size:12.7px;color:#3a0000;right:569px;"><span>0.00</span></div>
<div class="t " id="t147" style="top:432.5px;font-size:12.7px;color:#3a0000;right:511px;"><span>0.00</span></div>
<div class="t " id="t148" style="top:432.5px;font-size:12.7px;color:#3a0000;right:453px;"><span>350.00</span></div>
<div class="t " id="t149" style="top:432.5px;font-size:12.7px;color:#003a3a;right:382px;"><span>7,450.00</span></div>
<div class="t " id="t150" style="top:450.5px;font-size:12.7px;color:#000;right:1088px;"><span>6</span></div>
<div class="t " id="t151" style="top:450.5px;font-size:12.7px;color:#000;left:191px;"><span>0007</span></div>
<div class="t " id="t152" style="top:450.5px;font-size:12.7px;color:#000;right:999px;"><span>11.00</span></div>
<div class="t " id="t153" style="top:450.5px;font-size:12.7px;color:#000;right:927px;"><span>250.00</span></div>
<div class="t " id="t154" style="top:450.5px;font-size:12.7px;color:#000;right:875px;"><span>0</span></div>
<div class="t " id="t155" style="top:450.5px;font-size:12.7px;color:#000;right:817px;"><span>0.00</span></div>
<div class="t " id="t156" style="top:450.5px;font-size:12.7px;color:#000080;right:748px;"><span>2,750.00</span></div>
<div class="t " id="t157" style="top:450.5px;font-size:12.7px;color:#3a0000;right:687px;"><span>0</span></div>
<div class="t " id="t158" style="top:450.5px;font-size:12.7px;color:#3a0000;right:625px;"><span>0.00</span></div>
<div class="t " id="t159" style="top:450.5px;font-size:12.7px;color:#3a0000;right:569px;"><span>0.00</span></div>
<div class="t " id="t160" style="top:450.5px;font-size:12.7px;color:#3a0000;right:511px;"><span>0.00</span></div>
<div class="t " id="t161" style="top:450.5px;font-size:12.7px;color:#3a0000;right:453px;"><span>0.00</span></div>
<div class="t " id="t162" style="top:450.5px;font-size:12.7px;color:#003a3a;right:382px;"><span>2,750.00</span></div>
<div class="t " id="t163" style="top:468.5px;font-size:12.7px;color:#000;right:1088px;"><span>7</span></div>
<div class="t " id="t164" style="top:468.5px;font-size:12.7px;color:#000;left:191px;"><span>0008</span></div>
<div class="t " id="t165" style="top:468.5px;font-size:12.7px;color:#000;right:999px;"><span>10.00</span></div>
<div class="t " id="t166" style="top:468.5px;font-size:12.7px;color:#000;right:927px;"><span>650.00</span></div>
<div class="t " id="t167" style="top:468.5px;font-size:12.7px;color:#000;right:875px;"><span>0</span></div>
<div class="t " id="t168" style="top:468.5px;font-size:12.7px;color:#000;right:817px;"><span>0.00</span></div>
<div class="t " id="t169" style="top:468.5px;font-size:12.7px;color:#000080;right:748px;"><span>6,500.00</span></div>
<div class="t " id="t170" style="top:468.5px;font-size:12.7px;color:#3a0000;right:687px;"><span>0</span></div>
<div class="t " id="t171" style="top:468.5px;font-size:12.7px;color:#3a0000;right:625px;"><span>0.00</span></div>
<div class="t " id="t172" style="top:468.5px;font-size:12.7px;color:#3a0000;right:569px;"><span>0.00</span></div>
<div class="t " id="t173" style="top:468.5px;font-size:12.7px;color:#3a0000;right:511px;"><span>0.00</span></div>
<div class="t " id="t174" style="top:468.5px;font-size:12.7px;color:#3a0000;right:453px;"><span>0.00</span></div>
<div class="t " id="t175" style="top:468.5px;font-size:12.7px;color:#003a3a;right:382px;"><span>6,500.00</span></div>
<div style="left:162px;top:379px;width:734px;height:1px;background:#0078d7;"></div>
<div style="left:162px;top:362px;width:1px;height:18px;background:#0078d7;"></div>
<div style="left:895px;top:362px;width:1px;height:18px;background:#0078d7;"></div>
<div style="left:529px;top:362px;width:58px;height:15px;border:1px solid #0078d7;"></div>
<svg style="left:157px;top:367px" width="4" height="8" viewBox="0 0 4 8"><path d="M0 0L4 4L0 8Z" fill="#000"/></svg>
<div class="t " id="t176" style="top:703.5px;font-size:13.5px;color:#0000ff;font-weight:bold;left:657px;"><span>* รวมทั้งสิ้น *</span></div>
<div class="t " id="t177" style="top:705.0px;font-size:14.4px;color:#0000ff;font-weight:bold;left:822px;"><span>44,875.00</span></div>
<div style="left:917px;top:174px;width:332px;height:213px;border:1px solid #a0a0a0;background:#fff;"></div>
<div style="left:1233px;top:176px;width:16px;height:212px;background:#f0f0f0;"></div>
<svg style="left:1237px;top:181px" width="7" height="6" viewBox="0 0 8 7"><path d="M0.2 3.8L4 0L7.8 3.8V6.8L4 3L0.2 6.8Z" fill="#5e5e5e"/></svg>
<svg style="left:1237px;top:377px" width="7" height="6" viewBox="0 0 8 7"><path d="M0.2 3.2L4 7L7.8 3.2V0.2L4 4L0.2 0.2Z" fill="#5e5e5e"/></svg>
<div style="left:1232px;top:175px;width:1px;height:213px;background:#fff;"></div>
<div style="left:1006px;top:175px;width:1px;height:27px;background:#e5e5e5;"></div>
<div style="left:1133px;top:175px;width:1px;height:27px;background:#e5e5e5;"></div>
<div style="left:918px;top:202px;width:215px;height:1px;background:#000;"></div>
<div style="left:918px;top:202px;width:215px;height:1px;background:#000;"></div>
<div style="left:918px;top:202px;width:314px;height:1px;background:#000;"></div>
<div class="t " id="t178" style="top:179.0px;font-size:12.0px;color:#000;left:918px;width:88px;text-align:center;"><span>ใบคุมรายการ</span></div>
<div class="t " id="t179" style="top:179.0px;font-size:11.75px;color:#000;left:1006px;width:127px;text-align:center;"><span>ค่าาแรง</span></div>
<div class="t " id="t180" style="top:179.0px;font-size:12.05px;color:#000;left:1133px;width:99px;text-align:center;"><span>จำนวนเงิน</span></div>
<div class="t " id="t181" style="top:202.5px;font-size:12px;color:#003a00;left:920px;"><span>F61000004</span></div>
<div class="t " id="t182" style="top:202.0px;font-size:11.8px;color:#003a00;left:1009px;"><span>เคาะ</span></div>
<div class="t " id="t183" style="top:202.0px;font-size:12.3px;color:#003a00;right:43px;"><span>120.00</span></div>
<div class="t " id="t184" style="top:220.5px;font-size:12px;color:#003a00;left:920px;"><span>F61000005</span></div>
<div class="t " id="t185" style="top:220.0px;font-size:11.8px;color:#003a00;left:1009px;"><span>เคาะ</span></div>
<div class="t " id="t186" style="top:220.0px;font-size:12.3px;color:#003a00;right:43px;"><span>120.00</span></div>
<div class="t " id="t187" style="top:238.5px;font-size:12px;color:#003a00;left:920px;"><span>F61000005</span></div>
<div class="t " id="t188" style="top:238.0px;font-size:11.8px;color:#003a00;left:1009px;"><span>เคาะ</span></div>
<div class="t " id="t189" style="top:238.0px;font-size:12.3px;color:#003a00;right:43px;"><span>200.00</span></div>
<div class="t " id="t190" style="top:256.5px;font-size:12px;color:#003a00;left:920px;"><span>F61000003</span></div>
<div class="t " id="t191" style="top:256.0px;font-size:11.8px;color:#003a00;left:1009px;"><span>เคาะ</span></div>
<div class="t " id="t192" style="top:256.0px;font-size:12.3px;color:#003a00;right:43px;"><span>85.00</span></div>
<div class="t " id="t193" style="top:274.5px;font-size:12px;color:#003a00;left:920px;"><span>F61000003</span></div>
<div class="t " id="t194" style="top:274.0px;font-size:11.8px;color:#003a00;left:1009px;"><span>เคาะ</span></div>
<div class="t " id="t195" style="top:274.0px;font-size:12.3px;color:#003a00;right:43px;"><span>90.00</span></div>
<div style="left:917px;top:393px;width:332px;height:174px;border:1px solid #a0a0a0;background:#fff;"></div>
<div style="left:1233px;top:395px;width:16px;height:173px;background:#f0f0f0;"></div>
<svg style="left:1237px;top:400px" width="7" height="6" viewBox="0 0 8 7"><path d="M0.2 3.8L4 0L7.8 3.8V6.8L4 3L0.2 6.8Z" fill="#5e5e5e"/></svg>
<svg style="left:1237px;top:557px" width="7" height="6" viewBox="0 0 8 7"><path d="M0.2 3.2L4 7L7.8 3.2V0.2L4 4L0.2 0.2Z" fill="#5e5e5e"/></svg>
<div style="left:1232px;top:394px;width:1px;height:174px;background:#fff;"></div>
<div style="left:945px;top:394px;width:1px;height:29px;background:#e5e5e5;"></div>
<div style="left:945px;top:423px;width:1px;height:145px;background:#c0c0c0;"></div>
<div style="left:1028px;top:394px;width:1px;height:29px;background:#e5e5e5;"></div>
<div style="left:1028px;top:423px;width:1px;height:145px;background:#c0c0c0;"></div>
<div style="left:1093px;top:394px;width:1px;height:29px;background:#e5e5e5;"></div>
<div style="left:1093px;top:423px;width:1px;height:145px;background:#c0c0c0;"></div>
<div style="left:1171px;top:394px;width:1px;height:29px;background:#e5e5e5;"></div>
<div style="left:1171px;top:423px;width:1px;height:145px;background:#c0c0c0;"></div>
<div style="left:918px;top:422px;width:314px;height:1px;background:#000;"></div>
<div class="t " id="t196" style="top:399.0px;font-size:11.8px;color:#000;left:918px;width:27px;text-align:center;"><span>ล/ด</span></div>
<div class="t " id="t197" style="top:399.0px;font-size:11.65px;color:#000;left:945px;width:83px;text-align:center;"><span>รายละเอียดรับ</span></div>
<div class="t " id="t198" style="top:399.0px;font-size:12.05px;color:#000;left:1028px;width:65px;text-align:center;"><span>จำนวนเงิน</span></div>
<div class="t " id="t199" style="top:399.0px;font-size:11.8px;color:#000;left:1093px;width:78px;text-align:center;"><span>รายละเอียดหัก</span></div>
<div class="t " id="t200" style="top:399.0px;font-size:12.05px;color:#000;left:1171px;width:61px;text-align:center;"><span>จำนวนเงิน</span></div>
<div class="t " id="t201" style="top:422.0px;font-size:11px;color:#000080;right:330px;"><span>1</span></div>
<div class="t " id="t202" style="top:422.5px;font-size:10.8px;color:#000080;left:949px;"><span>เบี้ยขยัน</span></div>
<div class="t " id="t203" style="top:422.0px;font-size:11px;color:#000080;right:184px;"><span>600.00</span></div>
<div class="t " id="t204" style="top:422.0px;font-size:11.4px;color:#400000;left:1097px;"><span>ค่าเครื่องมือ</span></div>
<div class="t " id="t205" style="top:422.0px;font-size:11px;color:#400000;right:45px;"><span>250.00</span></div>
<div class="t " id="t206" style="top:441.0px;font-size:11px;color:#000080;right:330px;"><span>2</span></div>
<div class="t " id="t207" style="top:441.0px;font-size:11.3px;color:#000080;left:949px;"><span>เงินกู้</span></div>
<div class="t " id="t208" style="top:441.0px;font-size:11px;color:#000080;right:184px;"><span>1,000.00</span></div>
<div class="t " id="t209" style="top:441.0px;font-size:11px;color:#400000;right:45px;"><span>0.00</span></div>
<div class="t " id="t210" style="top:460.0px;font-size:11px;color:#000080;right:330px;"><span>3</span></div>
<div class="t " id="t211" style="top:460.0px;font-size:10.95px;color:#000080;left:949px;"><span>ต่อชิ้นงาน</span></div>
<div class="t " id="t212" style="top:460.0px;font-size:11px;color:#000080;right:184px;"><span>615.00</span></div>
<div class="t " id="t213" style="top:460.0px;font-size:11px;color:#400000;right:45px;"><span>0.00</span></div>
<div class="t " id="t214" style="top:479.0px;font-size:11px;color:#000080;right:330px;"><span>4</span></div>
<div class="t " id="t215" style="top:479.0px;font-size:11px;color:#000080;right:184px;"><span>0.00</span></div>
<div class="t " id="t216" style="top:479.0px;font-size:11.6px;color:#400000;left:1097px;"><span>เบิกล่วงหน้า</span></div>
<div class="t " id="t217" style="top:479.0px;font-size:11px;color:#400000;right:45px;"><span>1,850.00</span></div>
<div style="left:917px;top:573px;width:332px;height:169px;border:1px solid #a0a0a0;background:#fff;"></div>
<div style="left:1233px;top:575px;width:16px;height:168px;background:#f0f0f0;"></div>
<svg style="left:1237px;top:580px" width="7" height="6" viewBox="0 0 8 7"><path d="M0.2 3.8L4 0L7.8 3.8V6.8L4 3L0.2 6.8Z" fill="#5e5e5e"/></svg>
<svg style="left:1237px;top:732px" width="7" height="6" viewBox="0 0 8 7"><path d="M0.2 3.2L4 7L7.8 3.2V0.2L4 4L0.2 0.2Z" fill="#5e5e5e"/></svg>
<div style="left:1232px;top:574px;width:1px;height:169px;background:#fff;"></div>
<div style="left:979px;top:574px;width:1px;height:29px;background:#e5e5e5;"></div>
<div style="left:1040px;top:574px;width:1px;height:29px;background:#e5e5e5;"></div>
<div style="left:1170px;top:574px;width:1px;height:29px;background:#e5e5e5;"></div>
<div style="left:918px;top:603px;width:314px;height:1px;background:#000;"></div>
<div class="t " id="t218" style="top:580.0px;font-size:11.8px;color:#000;left:918px;width:61px;text-align:center;"><span>อ้างถึง</span></div>
<div class="t " id="t219" style="top:580.0px;font-size:11.8px;color:#000;left:979px;width:61px;text-align:center;"><span>วันที่</span></div>
<div class="t " id="t220" style="top:580.0px;font-size:11.65px;color:#000;left:1040px;width:130px;text-align:center;"><span>รายละเอียด</span></div>
<div class="t " id="t221" style="top:580.0px;font-size:12.05px;color:#000;left:1170px;width:62px;text-align:center;"><span>จำนวนเงิน</span></div>
<div style="left:918px;top:621px;width:314px;height:1px;background:#c0c0c0;"></div>
<div style="left:918px;top:639px;width:314px;height:1px;background:#c0c0c0;"></div>
<div style="left:918px;top:657px;width:314px;height:1px;background:#c0c0c0;"></div>
<div style="left:918px;top:675px;width:314px;height:1px;background:#c0c0c0;"></div>
<div style="left:918px;top:693px;width:314px;height:1px;background:#c0c0c0;"></div>
<div style="left:918px;top:711px;width:314px;height:1px;background:#c0c0c0;"></div>
<div style="left:918px;top:729px;width:314px;height:1px;background:#c0c0c0;"></div>
<div class="t " id="t222" style="top:603.0px;font-size:11px;color:#800000;left:919px;"><span>61/000001</span></div>
<div class="t " id="t223" style="top:603.0px;font-size:11px;color:#800000;left:982px;"><span>03/11/18</span></div>
<div class="t " id="t224" style="top:603.0px;font-size:11.35px;color:#800000;left:1043px;"><span>เบิกล่วงหน้า ค่าโอที</span></div>
<div class="t " id="t225" style="top:603.0px;font-size:11px;color:#800000;right:43px;"><span>450.00</span></div>
<div class="t " id="t226" style="top:621.0px;font-size:11px;color:#800000;left:919px;"><span>61/000001</span></div>
<div class="t " id="t227" style="top:621.0px;font-size:11px;color:#800000;left:982px;"><span>12/11/18</span></div>
<div class="t " id="t228" style="top:621.0px;font-size:11.0px;color:#800000;left:1043px;"><span>เบิกค่าเบียร์</span></div>
<div class="t " id="t229" style="top:621.0px;font-size:11px;color:#800000;right:43px;"><span>750.00</span></div>
<div class="t " id="t230" style="top:639.0px;font-size:11px;color:#800000;left:919px;"><span>61/000002</span></div>
<div class="t " id="t231" style="top:639.0px;font-size:11px;color:#800000;left:982px;"><span>18/11/18</span></div>
<div class="t " id="t232" style="top:639.0px;font-size:11.2px;color:#800000;left:1043px;"><span>ขอเบิกจ่ายค่าซ่อมรถ</span></div>
<div class="t " id="t233" style="top:639.0px;font-size:11px;color:#800000;right:43px;"><span>650.00</span></div>
<div style="left:1166px;top:748px;width:107px;height:13px;background:#fff;border-left:1px solid #555;border-top:1px solid #555;"></div>
<div class="t ui" id="t234" style="top:748.0px;font-size:12.1px;color:#575757;left:1172px;"><span>3 new notifications</span></div>
</body></html>
